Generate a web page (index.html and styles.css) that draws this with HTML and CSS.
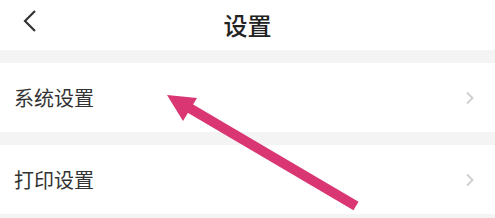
FILE: index.html
```html
<!DOCTYPE html>
<html lang="zh-CN">
<head>
    <meta charset="UTF-8">
    <meta name="viewport" content="width=device-width, initial-scale=1.0">
    <title>设置</title>
    <link rel="stylesheet" href="styles.css">
</head>
<body>
    <div class="page">
        <div class="header">
            <span class="back">
                <svg width="16" height="24" viewBox="0 0 16 24">
                    <path d="M13 2 L3 12 L13 22" fill="none" stroke="#333" stroke-width="2.2"/>
                </svg>
            </span>
            <h1>设置</h1>
        </div>
        <div class="gap"></div>
        <div class="item">
            <span class="item-label">系统设置</span>
            <svg class="chevron" width="10" height="14" viewBox="0 0 10 14">
                <path d="M2 1.5 L7.5 7 L2 12.5" fill="none" stroke="#d0d0d0" stroke-width="2"/>
            </svg>
        </div>
        <div class="gap"></div>
        <div class="item">
            <span class="item-label">打印设置</span>
            <svg class="chevron" width="10" height="14" viewBox="0 0 10 14">
                <path d="M2 1.5 L7.5 7 L2 12.5" fill="none" stroke="#d0d0d0" stroke-width="2"/>
            </svg>
        </div>
        <div class="gap"></div>

        <!-- annotation arrow -->
        <svg class="pointer" width="495" height="218" viewBox="0 0 495 218">
            <line x1="356" y1="206" x2="186" y2="106" stroke="#d93673" stroke-width="10"/>
            <polygon points="167,95 197,98 183,121" fill="#d93673"/>
        </svg>
    </div>
</body>
</html>
```

FILE: styles.css
```css
body {
    margin: 0;
    font-family: "Noto Sans CJK SC", "Noto Sans", sans-serif;
    background-color: #f4f4f4;
    color: #333;
}

.page {
    position: relative;
    width: 495px;
    height: 218px;
    overflow: hidden;
}

.header {
    position: relative;
    height: 50px;
    background: white;
    display: flex;
    align-items: center;
    justify-content: center;
}

.back {
    position: absolute;
    left: 22px;
    top: 9px;
}

h1 {
    margin: 0;
    font-size: 24px;
    font-weight: 500;
    color: #222;
    line-height: 42px;
}

.gap {
    height: 13px;
    background-color: #f4f4f4;
}

.item {
    height: 69px;
    background: white;
    display: flex;
    align-items: center;
    justify-content: space-between;
    padding: 0 20px 0 14px;
}

.item-label {
    font-size: 20px;
    color: #333;
}

.pointer {
    position: absolute;
    left: 0;
    top: 0;
}
```
